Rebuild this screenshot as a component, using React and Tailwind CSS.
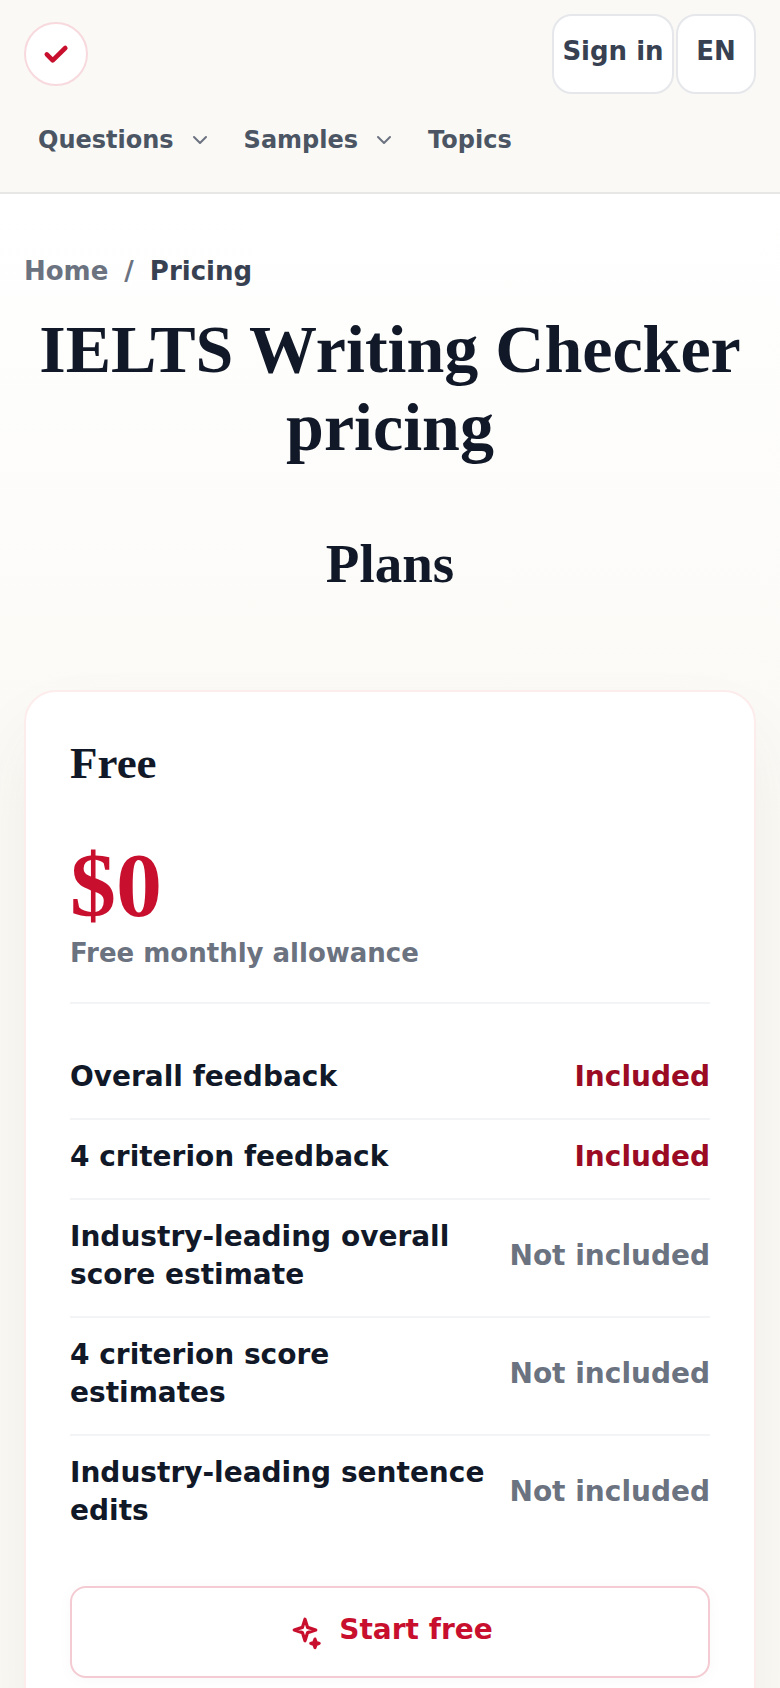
import { ChevronDown } from "lucide-react"

const navItems = [
  { label: "Questions", menu: true },
  { label: "Samples", menu: true },
  { label: "Topics", menu: false },
]

const features = [
  { name: "Overall feedback", included: true },
  { name: "4 criterion feedback", included: true },
  { name: "Industry-leading overall score estimate", included: false },
  { name: "4 criterion score estimates", included: false },
  { name: "Industry-leading sentence edits", included: false },
]

function SparkleIcon() {
  return (
    <svg
      viewBox="0 0 36 36"
      className="size-9 shrink-0"
      fill="none"
      stroke="currentColor"
      strokeWidth="3.2"
      strokeLinecap="round"
      strokeLinejoin="round"
      aria-hidden="true"
    >
      <path d="M18 5.2l2.6 8.2 8.2 2.6-8.2 2.6L18 26.8l-2.6-8.2L7.2 16l8.2-2.6z" />
      <path
        d="M28 25l1.2 3.1 3.1 1.2-3.1 1.2-1.2 3.1-1.2-3.1-3.1-1.2 3.1-1.2z"
        fill="currentColor"
        strokeWidth="3"
      />
    </svg>
  )
}

function Header() {
  return (
    <header className="border-b-2 border-[#e7e7e5] bg-[#faf9f6] px-6 pt-[14px] pb-[34px]">
      <div className="flex items-center justify-between">
        <a
          href="#"
          aria-label="IELTS Writing Checker"
          className="flex size-16 items-center justify-center rounded-full border-2 border-[#f7d9de] bg-white text-[#c8102e]"
        >
          <svg
            viewBox="0 0 28 28"
            className="size-7"
            fill="none"
            stroke="currentColor"
            strokeWidth="4.6"
            strokeLinecap="round"
            strokeLinejoin="round"
            aria-hidden="true"
          >
            <path d="M4.8 14.4l5.9 6L23.3 8" />
          </svg>
        </a>
        <div className="flex gap-[2px] text-[26px] leading-[36px] font-bold text-[#374151]">
          <a
            href="#"
            className="flex h-20 w-[122px] items-center justify-center rounded-[20px] border-2 border-[#e5e7eb] bg-white pb-[6px] whitespace-nowrap"
          >
            Sign in
          </a>
          <button
            type="button"
            className="flex h-20 w-20 items-center justify-center rounded-[20px] border-2 border-[#e5e7eb] bg-white pb-[6px]"
          >
            EN
          </button>
        </div>
      </div>
      <nav className="mt-7 flex gap-1 text-2xl leading-[36px] font-bold text-[#4b5563]">
        {navItems.map((item) =>
          item.menu ? (
            <button
              key={item.label}
              type="button"
              className="flex items-center gap-[14px] px-[14px]"
            >
              {item.label}
              <ChevronDown className="size-6 text-[#6b7280]" strokeWidth={2} />
            </button>
          ) : (
            <a key={item.label} href="#" className="px-[14px]">
              {item.label}
            </a>
          )
        )}
      </nav>
    </header>
  )
}

function PlanCard() {
  return (
    <section className="mt-[94px] rounded-[32px] border-2 border-[#fdecec] bg-white px-11 pt-[43px] pb-11 shadow-[0_36px_72px_rgba(80,60,20,0.06)]">
      <h3 className="font-['Liberation_Serif',serif] text-[45px] leading-[56px] font-bold">
        Free
      </h3>
      <div className="border-b-2 border-[#f3f4f6] pt-12 pb-[29px]">
        <p className="font-['Liberation_Serif',serif] text-[92px] leading-[92px] font-bold text-[#c8102e]">
          $0
        </p>
        <p className="mt-[2px] text-[26px] leading-[40px] font-bold text-[#6b7280]">
          Free monthly allowance
        </p>
      </div>
      <ul className="mt-9 text-[28px] leading-[38px] font-bold">
        {features.map((feature) => (
          <li
            key={feature.name}
            className="flex items-center justify-between gap-6 border-b-2 border-[#f3f4f6] pt-[18px] pb-[22px] last:border-b-0"
          >
            <span>{feature.name}</span>
            {feature.included ? (
              <span className="whitespace-nowrap text-[#9b0c24]">Included</span>
            ) : (
              <span className="whitespace-nowrap text-[#6b7280]">
                Not included
              </span>
            )}
          </li>
        ))}
      </ul>
      <a
        href="#"
        className="mt-[34px] flex h-[92px] items-center justify-center gap-4 rounded-2xl border-2 border-[#f4cbd2] bg-white text-[28px] leading-[38px] font-bold text-[#c8102e] shadow-[0_2px_16px_rgba(17,24,39,0.03)]"
      >
        <SparkleIcon />
        <span className="pb-1">Start free</span>
      </a>
    </section>
  )
}

export default function App() {
  return (
    <div className="min-h-screen overflow-hidden bg-[#faf9f6] font-['DejaVu_Sans',sans-serif] text-[#111827]">
      <Header />
      <main className="bg-linear-to-b from-white to-[#faf9f5] to-[640px] px-6 pt-[57px] pb-16">
        <nav
          aria-label="Breadcrumb"
          className="flex gap-4 text-[26px] leading-[40px] font-bold text-[#6b7280]"
        >
          <a href="#">Home</a>
          <span>/</span>
          <span aria-current="page" className="text-[#374151]">
            Pricing
          </span>
        </nav>
        <h1 className="mt-[19px] text-center font-['Liberation_Serif',serif] text-[68px] leading-[78px] font-bold">
          IELTS Writing Checker pricing
        </h1>
        <h2 className="mt-[66px] text-center font-['Liberation_Serif',serif] text-[55px] leading-[64px] font-bold">
          Plans
        </h2>
        <PlanCard />
      </main>
    </div>
  )
}
